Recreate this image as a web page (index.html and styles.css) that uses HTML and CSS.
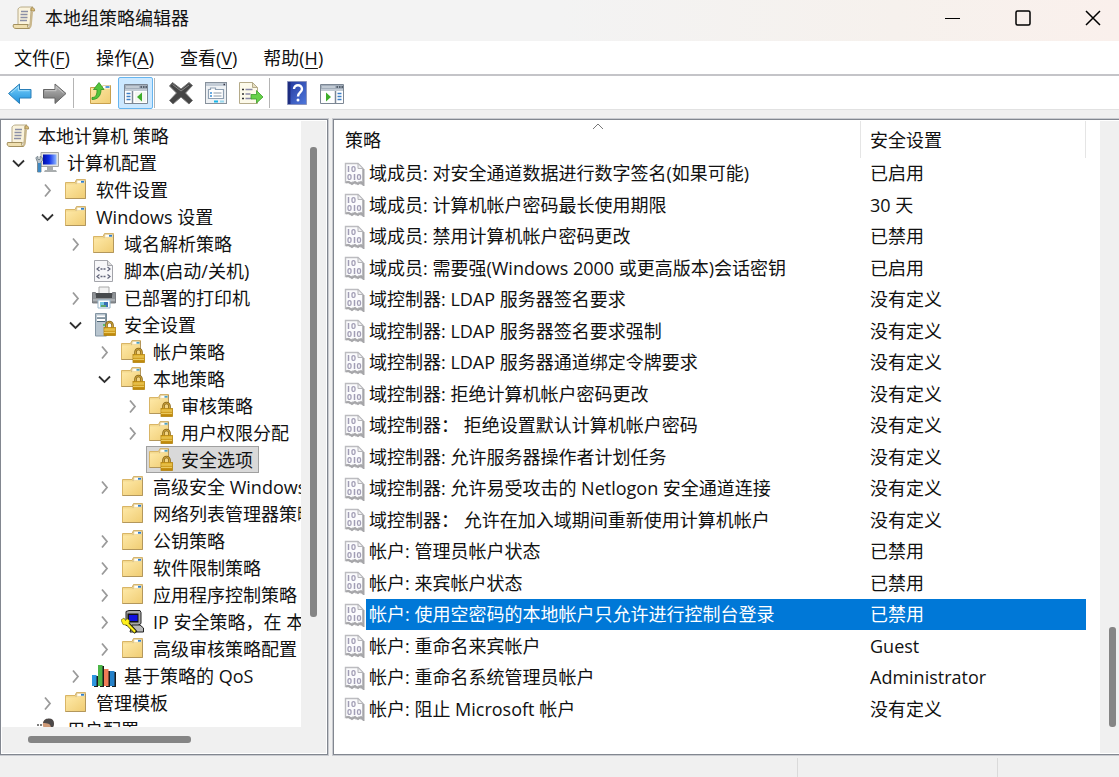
FILE: index.html
```html
<!DOCTYPE html>
<html lang="zh-CN">
<head>
    <meta charset="UTF-8">
    <meta name="viewport" content="width=device-width, initial-scale=1.0">
    <title>本地组策略编辑器</title>
    <link rel="stylesheet" href="styles.css">
</head>
<body>
    <!-- icon sprites -->
    <svg class="sprites" aria-hidden="true">
        <defs>
            <linearGradient id="gFolder" x1="0" y1="0" x2="1" y2="1"><stop offset="0" stop-color="#fee9a8"/><stop offset="1" stop-color="#f0cd74"/></linearGradient>
            <linearGradient id="gLock" x1="0" y1="0" x2="0" y2="1"><stop offset="0" stop-color="#e9bd3c"/><stop offset="1" stop-color="#b98206"/></linearGradient>
            <linearGradient id="gBlue" x1="0" y1="0" x2="0" y2="1"><stop offset="0" stop-color="#7fd3fb"/><stop offset="1" stop-color="#1b8fdd"/></linearGradient>
            <linearGradient id="gGray" x1="0" y1="0" x2="0" y2="1"><stop offset="0" stop-color="#bdbdbd"/><stop offset="1" stop-color="#6d6d6d"/></linearGradient>
            <linearGradient id="gHelp" x1="0" y1="0" x2="1" y2="1"><stop offset="0" stop-color="#24389c"/><stop offset="1" stop-color="#4f78dc"/></linearGradient>
            <linearGradient id="gScreen" x1="0" y1="0" x2="1" y2="0"><stop offset="0" stop-color="#0010a8"/><stop offset="0.45" stop-color="#1030e8"/><stop offset="1" stop-color="#8fb8ff"/></linearGradient>
        </defs>
        <symbol id="i-scroll" viewBox="0 0 24 24">
            <path d="M6 3c1-1.500 2-2 4-2h11c-2 1-2 2-2 4l-1 14H6z" fill="#faf3dc" stroke="#b9ac88"/>
            <path d="M19 2c2-1 4 .5 3.500 3H19z" fill="#d9bd78" stroke="#a58c55"/>
            <path d="M1.500 18.500H16c-1 2 0 4 2 4H4c-2.500 0-3.500-2-2.500-4z" fill="#efdfaf" stroke="#a3905f"/>
            <path d="M17 22c2-1 2-3 2-5l1-11" fill="none" stroke="#c9b78c" stroke-width="2"/>
            <path d="M9 5.500h7M8.500 8.500h7M8.500 11.500h7M8 14.500h7" stroke="#8b8fa6" stroke-width="1.300"/>
        </symbol>
        <symbol id="i-folder" viewBox="0 0 24 24">
            <path d="M1.500 4.500H11l1.500-3h9v19h-20z" fill="#f3d98f" stroke="#d9b566"/>
            <path d="M12.500 2h8.500v4h-9z" fill="#fff3cf" stroke="#cdb27a" stroke-width=".8"/>
            <path d="M14 3.800h3" stroke="#fff" stroke-width="1.600"/><path d="M17 3.800h3" stroke="#2d7fd0" stroke-width="1.800"/>
            <path d="M2 6.500h10l1.500-1H21V20H2z" fill="url(#gFolder)"/>
            <path d="M1.500 20.500h20V3" fill="none" stroke="#b3975c"/>
        </symbol>
        <symbol id="i-lock" viewBox="0 0 24 24">
            <path d="M14.500 15v-3a3 3 0 0 1 6 0v3" fill="none" stroke="#8b6a1c" stroke-width="2.600"/>
            <path d="M14.500 15v-3a3 3 0 0 1 6 0v3" fill="none" stroke="#d0a53a" stroke-width="1"/>
            <rect x="12" y="14.500" width="11.500" height="8" fill="url(#gLock)" stroke="#b5840f" stroke-width=".8"/>
            <path d="M12 17h11M12 19.500h11" stroke="#f3d670" stroke-width=".8"/>
        </symbol>
        <symbol id="i-lockfolder" viewBox="0 0 24 24">
            <path d="M.5 3.500H9.500L11 .5h8.500v19H.5z" fill="#f3d98f" stroke="#d9b566"/>
            <path d="M11 1h8v4h-8.500z" fill="#fff3cf" stroke="#cdb27a" stroke-width=".8"/>
            <path d="M12.500 2.800h3" stroke="#fff" stroke-width="1.600"/><path d="M15.500 2.800h3" stroke="#4aa0c8" stroke-width="1.800"/>
            <path d="M1 5.500h9.500l1.500-1H19V19H1z" fill="url(#gFolder)"/>
            <path d="M.5 19.500h12M19.500 1v10" stroke="#b3975c"/>
            <use href="#i-lock"/>
        </symbol>
        <symbol id="i-computer" viewBox="0 0 24 24">
            <path d="M6 1.500h17.500v14H6z" fill="#e2e3df" stroke="#a4a6a4"/>
            <rect x="8" y="3.500" width="13.500" height="10" fill="url(#gScreen)"/>
            <path d="M12 16h6v3h3l1 2H9l1-2h2z" fill="#a9adae"/>
            <path d="M1 7.500c0-1.500 1-2 2-2v3h2v-3c2 0 3 2 2.500 4L6 11v10H2.500V11z" fill="#b9c3ca" stroke="#66737c" stroke-width=".8"/>
            <rect x="3" y="12" width="3" height="9" fill="#3e8ac4"/>
        </symbol>
        <symbol id="i-script" viewBox="0 0 24 24">
            <path d="M2.500 1.500h13l5 5v16h-18z" fill="#f7f7f9" stroke="#a3a4aa"/>
            <path d="M15.500 1.500v5h5" fill="#ddd" stroke="#a3a4aa"/>
            <path d="M7.500 8L5 10l2.500 2M15.500 8l2.500 2-2.500 2M7.500 15.500L5 17.500l2.500 2M15.500 15.500l2.500 2-2.500 2" fill="none" stroke="#62657a" stroke-width="1.200"/>
            <path d="M8.500 10h6M8.500 17.500h6" stroke="#62657a" stroke-width="1.300" stroke-dasharray="2 1"/>
        </symbol>
        <symbol id="i-printer" viewBox="0 0 24 24">
            <path d="M7 1h10v7H7z" fill="#f2f2f2" stroke="#a8a8a8"/>
            <path d="M.5 6.500h3V9h17V6.500h3V17H.5z" fill="#8f9397" stroke="#686b6e" stroke-width=".8"/>
            <path d="M4 7h16v5H4z" fill="#474a4d"/>
            <path d="M1 14h22" stroke="#c8ccd0"/>
            <path d="M6 14h12v8H6z" fill="#fff" stroke="#9ab7ca"/>
            <path d="M8 16h8v5H8z" fill="#77c7df"/><path d="M12 16h4v5h-4z" fill="#3970b5"/><path d="M9 19h5v2H9z" fill="#5da66a"/>
        </symbol>
        <symbol id="i-server" viewBox="0 0 24 24">
            <path d="M3.500.5h11v22.500h-11z" fill="#b8c5cf" stroke="#8495a3"/>
            <path d="M14 1v22" stroke="#71838f" stroke-width="1.500"/>
            <path d="M5 3.500h8M5 7h8" stroke="#fff" stroke-width="2"/>
            <path d="M5 5h8M5 8.500h8" stroke="#4d6575"/>
            <path d="M11 12h2" stroke="#42b84a" stroke-width="1.500"/>
            <use href="#i-lock"/>
        </symbol>
        <symbol id="i-ipsec" viewBox="0 0 24 24">
            <path d="M5 1.500L8 .5h11l1 2v11l-3 2H5z" fill="#a7a7a7" stroke="#222"/>
            <rect x="6.500" y="3.500" width="11" height="9" fill="#111"/>
            <rect x="8" y="5" width="8.500" height="6" fill="#1010e0"/>
            <path d="M11 15h8l3.500 3v4H9z" fill="#b8b8b8" stroke="#222"/>
            <path d="M7 14l8 8.500" stroke="#111" stroke-width="4"/>
            <path d="M0 10l3-2 1.500 2.500L6 8.500l2.500 2-.5 3 7 7.500-1.500 2-8-8-3.500-.5z" fill="#fff01a" stroke="#5c5600" stroke-width=".6"/>
        </symbol>
        <symbol id="i-qos" viewBox="0 0 24 24">
            <path d="M2 12h4v11H2zM8 2h4v21H8zM14 7h4v16h-4zM20 8h4v15h-4z" fill="#1a1a1a"/>
            <path d="M0 11h4.500v11H0z" fill="#2d96e0"/><path d="M6 1h4.500v21H6z" fill="#4cb648"/><path d="M12 5h4.500v17H12z" fill="#f07c56"/><path d="M18 7h4.500v15H18z" fill="#2581c9"/>
        </symbol>
        <symbol id="i-user" viewBox="0 0 24 24">
            <path d="M8 8c-1-6 3-7 6-7s6 2 4 8l-3 6h-4z" fill="#cf9a77"/>
            <path d="M8 5c1-4 4-4.500 6-4.500 4 0 6 3 4.500 8L16 10c0-4-3-5-8-5z" fill="#4c4848"/>
            <path d="M2 7h2M5 7h2" stroke="#555" stroke-width="1.500"/>
            <path d="M5 22c0-6 4-8 8-8s8 2 8 8z" fill="#4a78b0"/>
        </symbol>
        <symbol id="i-policy" viewBox="0 0 22 24">
            <path d="M1.500 1.500h12.500l5 5v15l-2 .5-2-2-3 2-3-2-3 1.500-2-2-2.500 1z" fill="#fbfbfd" stroke="#bcbcc0" stroke-width="1.400"/>
            <path d="M2 20.500l3-.5 3 2 3-2 3 2 3-2 2.500 3V7" fill="none" stroke="#a6a6a9" stroke-width="2"/>
            <path d="M14 1.500v5h5z" fill="#f0f0f2" stroke="#b4b4b8"/>
            <path d="M4.500 4v6" stroke="#a19db5" stroke-width="1.500"/>
            <rect x="8" y="4.600" width="3" height="4.800" rx="1.500" fill="none" stroke="#a19db5" stroke-width="1.300"/>
            <rect x="4" y="12.600" width="3" height="4.800" rx="1.500" fill="none" stroke="#a19db5" stroke-width="1.300"/>
            <path d="M10.500 12v6" stroke="#a19db5" stroke-width="1.500"/>
            <rect x="13.500" y="12.600" width="3" height="4.800" rx="1.500" fill="none" stroke="#a19db5" stroke-width="1.300"/>
        </symbol>
        <symbol id="i-back" viewBox="0 0 26 24">
            <path d="M1.500 12.500L12.500 3V8.500H24v8.500H12.500V22.500z" fill="url(#gBlue)" stroke="#2a7fb8" stroke-linejoin="round"/>
            <path d="M4 12l7.500-6.500v4.200H22.500" fill="none" stroke="#a5dffb"/>
        </symbol>
        <symbol id="i-forward" viewBox="0 0 26 24">
            <path d="M24 12.500L13 3V8.500H1.500v8.500H13V22.500z" fill="url(#gGray)" stroke="#666" stroke-linejoin="round"/>
            <path d="M3 9.700h11V5.500l7.500 6.500" fill="none" stroke="#c6c6c6"/>
        </symbol>
        <symbol id="i-up" viewBox="0 0 24 24">
            <path d="M1.500 6.500H12l2-2h7.500v18h-20z" fill="url(#gFolder)" stroke="#c8a04c"/>
            <rect x="14" y="4.500" width="7" height="3" fill="#fff"/><path d="M16.500 6h4" stroke="#2d7fd0" stroke-width="1.600"/>
            <path d="M3 16.500c4.500 0 5-3.500 5-8H4.500L10 1.500l5 7h-3c0 6-3 10-9 10z" fill="#52c53b" stroke="#2f8f22" stroke-width=".8"/>
        </symbol>
        <symbol id="i-pane" viewBox="0 0 26 24">
            <path d="M1.500 3.500h23v19h-23z" fill="#fff" stroke="#7c8794"/>
            <path d="M2 4h22v6H2z" fill="#a3aebb"/><path d="M3 6h13M2 9h22" stroke="#e0e6ec"/><path d="M17.500 6h1.500M20 6h1.500M22.500 6H24" stroke="#3b4653" stroke-width="1.500"/>
            <path d="M9.500 10v12" stroke="#7c8794" stroke-width="1.500"/>
            <path d="M3.500 12.500h4M3.500 15.500h4M3.500 18.500h4" stroke="#3e7fc6" stroke-width="1.500"/>
            <path d="M12 11h11v10H12z" fill="#f4f6f2"/><path d="M19 11.500v9L14 16z" fill="#3fae2a"/>
        </symbol>
        <symbol id="i-action" viewBox="0 0 26 24">
            <path d="M1.500 3.500h23v19h-23z" fill="#fff" stroke="#7c8794"/>
            <path d="M2 4h22v6H2z" fill="#a3aebb"/><path d="M3 6h13M2 9h22" stroke="#e0e6ec"/><path d="M17.500 6h1.500M20 6h1.500M22.500 6H24" stroke="#3b4653" stroke-width="1.500"/>
            <path d="M16.500 10v12" stroke="#7c8794" stroke-width="1.500"/>
            <path d="M18.500 12.500h4M18.500 15.500h4M18.500 18.500h4" stroke="#3e7fc6" stroke-width="1.500"/>
            <path d="M7 11.500v9l5-4.500z" fill="#3fae2a"/>
        </symbol>
        <symbol id="i-delete" viewBox="0 0 26 24">
            <path d="M4.500 1.500L13 8l8-6.500 3.500 3-7 7.500 7 7.500-3.500 3.500-8-7-8 7L1.500 19.500l7-7.500-7-7z" fill="#454545" stroke="#777" stroke-linejoin="round"/>
            <path d="M4.500 3.500L13 10l8-6" fill="none" stroke="#888"/>
        </symbol>
        <symbol id="i-props" viewBox="0 0 24 24">
            <rect x="1.500" y="1.500" width="21" height="21" fill="#eef1f4" stroke="#87919c"/>
            <path d="M2 2h20v3H2z" fill="#c3ccd6"/><path d="M19.500 3.500H21" stroke="#334" stroke-width="1.500"/>
            <path d="M4.500 8.500h2V7h5v1.500h8v9h-15z" fill="#fff" stroke="#8fa0b2" stroke-width="1.200"/>
            <path d="M6 12h2M6 15h2" stroke="#3a8fd6" stroke-width="1.500"/><path d="M9.500 12h8M9.500 15h8" stroke="#8897a6"/>
            <path d="M10 20.500h4" stroke="#16b5e8" stroke-width="2"/><path d="M16 20.500h4" stroke="#9ad8ee" stroke-width="2"/>
        </symbol>
        <symbol id="i-export" viewBox="0 0 26 24">
            <path d="M1.500 1.500h13l5 5v16h-18z" fill="#fdfaea" stroke="#b5ab8a"/>
            <path d="M14.500 1.500v5h5z" fill="#e6dec0" stroke="#b5ab8a"/>
            <path d="M4 8.500h2M4 13h2M4 17.500h2" stroke="#333" stroke-width="1.600"/><path d="M7.500 8.500h7M7.500 13h5M7.500 17.500h6" stroke="#8c8aa8" stroke-width="1.300"/>
            <path d="M13 13.500h5.500v-4L25 16l-6.500 6v-4H13z" fill="#66d148" stroke="#3a9e28" stroke-width=".8"/>
        </symbol>
        <symbol id="i-help" viewBox="0 0 24 24">
            <path d="M2.500.5h19v23h-19z" fill="url(#gHelp)" stroke="#8a93bd"/>
            <path d="M3 1h2.500v22H3z" fill="#1d2c80"/>
            <path d="M9 8c0-5 8-5 8 0 0 3.500-4 3.500-4 7.500" fill="none" stroke="#fff" stroke-width="2.400"/><circle cx="13" cy="19" r="1.500" fill="#fff"/>
        </symbol>
        <symbol id="i-right" viewBox="0 0 20 20"><path d="M8 4.500L13 10.500l-5 6" fill="none" stroke="#9a9a9a" stroke-width="1.800"/></symbol>
        <symbol id="i-down" viewBox="0 0 20 20"><path d="M5 7.500l5.500 5.500L16 7.500" fill="none" stroke="#303030" stroke-width="1.800"/></symbol>
    </svg>

    <header class="titlebar">
        <svg class="icon"><use href="#i-scroll"/></svg>
        <h1>本地组策略编辑器</h1>
        <div class="window-buttons">
            <button aria-label="最小化"><svg viewBox="0 0 16 16"><path d="M0 8.500h15"/></svg></button>
            <button aria-label="最大化"><svg viewBox="0 0 16 16"><rect x="1" y="1" width="14" height="14" rx="1.500" stroke-width="1.500"/></svg></button>
            <button aria-label="关闭"><svg viewBox="0 0 16 16"><path d="M1 1l14 14M15 1L1 15" stroke-width="1.500"/></svg></button>
        </div>
    </header>

    <nav class="menubar">
        <button>文件(<u>F</u>)</button>
        <button>操作(<u>A</u>)</button>
        <button>查看(<u>V</u>)</button>
        <button>帮助(<u>H</u>)</button>
    </nav>

    <div class="toolbar">
        <button aria-label="后退"><svg><use href="#i-back"/></svg></button>
        <button aria-label="前进"><svg><use href="#i-forward"/></svg></button>
        <span class="separator"></span>
        <button aria-label="上一级"><svg><use href="#i-up"/></svg></button>
        <button class="active" aria-label="显示控制台树" aria-pressed="true"><svg><use href="#i-pane"/></svg></button>
        <span class="separator"></span>
        <button aria-label="删除"><svg><use href="#i-delete"/></svg></button>
        <button aria-label="属性"><svg><use href="#i-props"/></svg></button>
        <button aria-label="导出列表"><svg><use href="#i-export"/></svg></button>
        <span class="separator"></span>
        <button aria-label="帮助"><svg><use href="#i-help"/></svg></button>
        <button aria-label="显示操作窗格"><svg><use href="#i-action"/></svg></button>
    </div>

    <main class="panes">
        <section class="tree-pane">
            <div class="tree-body">
                <ul class="tree">
                    <li class="lv0"><span class="node"><svg class="icon"><use href="#i-scroll"/></svg>本地计算机 策略</span></li>
                    <li class="lv1"><button class="toggle" aria-label="折叠"><svg><use href="#i-down"/></svg></button><span class="node"><svg class="icon"><use href="#i-computer"/></svg>计算机配置</span></li>
                    <li class="lv2"><button class="toggle" aria-label="展开"><svg><use href="#i-right"/></svg></button><span class="node"><svg class="icon"><use href="#i-folder"/></svg>软件设置</span></li>
                    <li class="lv2"><button class="toggle" aria-label="折叠"><svg><use href="#i-down"/></svg></button><span class="node"><svg class="icon"><use href="#i-folder"/></svg>Windows 设置</span></li>
                    <li class="lv3"><button class="toggle" aria-label="展开"><svg><use href="#i-right"/></svg></button><span class="node"><svg class="icon"><use href="#i-folder"/></svg>域名解析策略</span></li>
                    <li class="lv3 leaf"><span class="node"><svg class="icon"><use href="#i-script"/></svg>脚本(启动/关机)</span></li>
                    <li class="lv3"><button class="toggle" aria-label="展开"><svg><use href="#i-right"/></svg></button><span class="node"><svg class="icon"><use href="#i-printer"/></svg>已部署的打印机</span></li>
                    <li class="lv3"><button class="toggle" aria-label="折叠"><svg><use href="#i-down"/></svg></button><span class="node"><svg class="icon"><use href="#i-server"/></svg>安全设置</span></li>
                    <li class="lv4"><button class="toggle" aria-label="展开"><svg><use href="#i-right"/></svg></button><span class="node"><svg class="icon"><use href="#i-lockfolder"/></svg>帐户策略</span></li>
                    <li class="lv4"><button class="toggle" aria-label="折叠"><svg><use href="#i-down"/></svg></button><span class="node"><svg class="icon"><use href="#i-lockfolder"/></svg>本地策略</span></li>
                    <li class="lv5"><button class="toggle" aria-label="展开"><svg><use href="#i-right"/></svg></button><span class="node"><svg class="icon"><use href="#i-lockfolder"/></svg>审核策略</span></li>
                    <li class="lv5"><button class="toggle" aria-label="展开"><svg><use href="#i-right"/></svg></button><span class="node"><svg class="icon"><use href="#i-lockfolder"/></svg>用户权限分配</span></li>
                    <li class="lv5 leaf"><span class="node selected"><svg class="icon"><use href="#i-lockfolder"/></svg>安全选项</span></li>
                    <li class="lv4"><button class="toggle" aria-label="展开"><svg><use href="#i-right"/></svg></button><span class="node"><svg class="icon"><use href="#i-folder"/></svg>高级安全 Windows</span></li>
                    <li class="lv4 leaf"><span class="node"><svg class="icon"><use href="#i-folder"/></svg>网络列表管理器策略</span></li>
                    <li class="lv4"><button class="toggle" aria-label="展开"><svg><use href="#i-right"/></svg></button><span class="node"><svg class="icon"><use href="#i-folder"/></svg>公钥策略</span></li>
                    <li class="lv4"><button class="toggle" aria-label="展开"><svg><use href="#i-right"/></svg></button><span class="node"><svg class="icon"><use href="#i-folder"/></svg>软件限制策略</span></li>
                    <li class="lv4"><button class="toggle" aria-label="展开"><svg><use href="#i-right"/></svg></button><span class="node"><svg class="icon"><use href="#i-folder"/></svg>应用程序控制策略</span></li>
                    <li class="lv4"><button class="toggle" aria-label="展开"><svg><use href="#i-right"/></svg></button><span class="node"><svg class="icon"><use href="#i-ipsec"/></svg>IP 安全策略，在 本</span></li>
                    <li class="lv4"><button class="toggle" aria-label="展开"><svg><use href="#i-right"/></svg></button><span class="node"><svg class="icon"><use href="#i-folder"/></svg>高级审核策略配置</span></li>
                    <li class="lv3"><button class="toggle" aria-label="展开"><svg><use href="#i-right"/></svg></button><span class="node"><svg class="icon"><use href="#i-qos"/></svg>基于策略的 QoS</span></li>
                    <li class="lv2"><button class="toggle" aria-label="展开"><svg><use href="#i-right"/></svg></button><span class="node"><svg class="icon"><use href="#i-folder"/></svg>管理模板</span></li>
                    <li class="lv1 leaf"><span class="node"><svg class="icon"><use href="#i-user"/></svg>用户配置</span></li>
                </ul>
                <div class="scroll-y"><div class="thumb"></div></div>
            </div>
            <div class="scroll-x"><div class="thumb"></div></div>
        </section>

        <section class="list-pane">
            <div class="list-body">
                <table class="policies">
                    <colgroup><col class="col-icon"><col><col class="col-setting"></colgroup>
                    <thead>
                        <tr>
                            <th colspan="2">策略<svg class="sort" viewBox="0 0 12 7"><path d="M1 6l5-5 5 5"/></svg></th>
                            <th>安全设置</th>
                        </tr>
                    </thead>
                    <tbody>
                        <tr><td><svg><use href="#i-policy"/></svg></td><td>域成员: 对安全通道数据进行数字签名(如果可能)</td><td>已启用</td></tr>
                        <tr><td><svg><use href="#i-policy"/></svg></td><td>域成员: 计算机帐户密码最长使用期限</td><td>30 天</td></tr>
                        <tr><td><svg><use href="#i-policy"/></svg></td><td>域成员: 禁用计算机帐户密码更改</td><td>已禁用</td></tr>
                        <tr><td><svg><use href="#i-policy"/></svg></td><td>域成员: 需要强(Windows 2000 或更高版本)会话密钥</td><td>已启用</td></tr>
                        <tr><td><svg><use href="#i-policy"/></svg></td><td>域控制器: LDAP 服务器签名要求</td><td>没有定义</td></tr>
                        <tr><td><svg><use href="#i-policy"/></svg></td><td>域控制器: LDAP 服务器签名要求强制</td><td>没有定义</td></tr>
                        <tr><td><svg><use href="#i-policy"/></svg></td><td>域控制器: LDAP 服务器通道绑定令牌要求</td><td>没有定义</td></tr>
                        <tr><td><svg><use href="#i-policy"/></svg></td><td>域控制器: 拒绝计算机帐户密码更改</td><td>没有定义</td></tr>
                        <tr><td><svg><use href="#i-policy"/></svg></td><td>域控制器： 拒绝设置默认计算机帐户密码</td><td>没有定义</td></tr>
                        <tr><td><svg><use href="#i-policy"/></svg></td><td>域控制器: 允许服务器操作者计划任务</td><td>没有定义</td></tr>
                        <tr><td><svg><use href="#i-policy"/></svg></td><td>域控制器: 允许易受攻击的 Netlogon 安全通道连接</td><td>没有定义</td></tr>
                        <tr><td><svg><use href="#i-policy"/></svg></td><td>域控制器： 允许在加入域期间重新使用计算机帐户</td><td>没有定义</td></tr>
                        <tr><td><svg><use href="#i-policy"/></svg></td><td>帐户: 管理员帐户状态</td><td>已禁用</td></tr>
                        <tr><td><svg><use href="#i-policy"/></svg></td><td>帐户: 来宾帐户状态</td><td>已禁用</td></tr>
                        <tr class="selected"><td><svg><use href="#i-policy"/></svg></td><td>帐户: 使用空密码的本地帐户只允许进行控制台登录</td><td>已禁用</td></tr>
                        <tr><td><svg><use href="#i-policy"/></svg></td><td>帐户: 重命名来宾帐户</td><td>Guest</td></tr>
                        <tr><td><svg><use href="#i-policy"/></svg></td><td>帐户: 重命名系统管理员帐户</td><td>Administrator</td></tr>
                        <tr><td><svg><use href="#i-policy"/></svg></td><td>帐户: 阻止 Microsoft 帐户</td><td>没有定义</td></tr>
                    </tbody>
                </table>
            </div>
            <div class="scroll-y"><div class="thumb"></div></div>
        </section>
    </main>

    <footer class="statusbar"><span></span><span></span><span></span></footer>
</body>
</html>
```
FILE: styles.css
```css
* {
    box-sizing: border-box;
}
body {
    margin: 0;
    height: 100vh;
    display: flex;
    flex-direction: column;
    overflow: hidden;
    background: #f0f0f0;
    color: #111;
    font-family: "Open Sans", "Noto Sans CJK SC", sans-serif;
    font-size: 18px;
    line-height: 26px;
}
button {
    margin: 0;
    padding: 0;
    border: 0;
    background: none;
    color: inherit;
    font: inherit;
}
svg {
    display: block;
    flex: none;
}
.sprites {
    position: absolute;
    width: 0;
    height: 0;
}
.icon {
    width: 24px;
    height: 24px;
}

/* title bar */
.titlebar {
    display: flex;
    align-items: center;
    height: 41px;
    padding-left: 12px;
    padding-bottom: 6px;
    gap: 9px;
    background: linear-gradient(90deg, #f3f3f3 50%, #f6f1ed 80%, #faf0ec);
}
.titlebar h1 {
    flex: 1;
    margin: 0;
    font-size: 18px;
    font-weight: normal;
}
.window-buttons {
    display: flex;
    padding-right: 2px;
}
.window-buttons button {
    width: 70px;
    height: 35px;
    display: flex;
    align-items: center;
    justify-content: center;
}
.window-buttons button:last-child {
    width: 48px;
    margin-left: 11px;
}
.window-buttons svg {
    width: 16px;
    height: 16px;
    fill: none;
    stroke: #000;
}

/* menu */
.menubar {
    display: flex;
    gap: 26px;
    height: 35px;
    padding: 0 14px;
    background: #fff;
    border-bottom: 2px solid #c4c4c8;
}
.menubar u {
    text-underline-offset: 3px;
    text-decoration-thickness: 1px;
}

/* toolbar */
.toolbar {
    display: flex;
    align-items: center;
    height: 34px;
    padding-left: 2px;
    background: #fff;
    border-bottom: 1px solid #e2e2e2;
}
.toolbar button {
    width: 35px;
    height: 32px;
    display: flex;
    align-items: center;
    justify-content: center;
    border: 1px solid transparent;
}
.toolbar button.active {
    background: #cce8ff;
    border-color: #66b5ef;
    border-radius: 2px;
}
.toolbar svg {
    width: 26px;
    height: 24px;
}
.separator {
    width: 1px;
    height: 30px;
    margin: 0 9px 0 1px;
    background: #b4b4b4;
}
.active + .separator {
    margin-right: 8px;
}

/* panes */
.panes {
    flex: 1;
    min-height: 0;
    display: flex;
    gap: 5px;
    padding-top: 9px;
}
.tree-pane,
.list-pane {
    border: 1px solid #828790;
    outline: 1px solid #c9cbd0;
    background: #fff;
    padding: 1px;
}
.tree-pane {
    width: 328px;
    flex: none;
    display: flex;
    flex-direction: column;
}
.tree-body {
    flex: 1;
    min-height: 0;
    display: flex;
}
.tree {
    flex: 1;
    min-width: 0;
    margin: 0;
    padding: 1px 0 0;
    list-style: none;
    overflow: hidden;
    white-space: nowrap;
}
.tree li {
    display: flex;
    align-items: center;
    height: 27px;
}
.lv0 { padding-left: 1px; }
.lv1 { padding-left: 6px; }
.lv2 { padding-left: 35px; }
.lv3 { padding-left: 63px; }
.lv4 { padding-left: 92px; }
.lv5 { padding-left: 120px; }
.toggle,
.toggle svg {
    flex: none;
    width: 20px;
    height: 20px;
}
.leaf::before {
    content: "";
    flex: none;
    width: 20px;
}
.node {
    flex: none;
    display: flex;
    align-items: center;
    gap: 8px;
    height: 27px;
    margin-left: 4px;
    padding: 0 5px 0 2px;
    border: 1px solid transparent;
}
.lv0 .node {
    margin-left: 0;
}
.node.selected {
    background: #d9d9d9;
    border-color: #a0a0a0;
}
.scroll-y {
    display: flex;
    justify-content: center;
    background: #f0f0f0;
}
.thumb {
    background: #858585;
    border-radius: 3px;
}
.tree-pane .scroll-y {
    width: 25px;
    padding-top: 26px;
}
.tree-pane .scroll-y .thumb {
    width: 7px;
    height: 81%;
}
.scroll-x {
    height: 26px;
    padding: 9px 26px;
    background: #f0f0f0;
}
.scroll-x .thumb {
    width: 60%;
    height: 7px;
}

/* policy list */
.list-pane {
    flex: 1;
    min-width: 0;
    display: flex;
    border-right: 0;
    padding-right: 0;
}
.list-body {
    flex: 1;
    min-width: 0;
    padding-right: 14px;
    overflow: hidden;
}
.list-pane .scroll-y {
    width: 19px;
    align-items: flex-end;
    padding: 0 0 26px 6px;
}
.list-pane .scroll-y .thumb {
    width: 7px;
    height: 100px;
}
.policies {
    width: 100%;
    table-layout: fixed;
    border-collapse: separate;
    border-spacing: 0;
}
.col-icon {
    width: 31px;
}
.col-setting {
    width: 225px;
}
.policies th {
    position: relative;
    height: 37px;
    padding: 0 9px;
    border-right: 1px solid #e5e5e5;
    font-weight: normal;
    text-align: left;
}
.policies th:first-child {
    padding-left: 10px;
}
.sort {
    position: absolute;
    top: 2px;
    left: 49%;
    width: 12px;
    height: 7px;
    fill: none;
    stroke: #777;
}
.policies td {
    height: 31px;
    padding: 0 3px 1px;
    white-space: nowrap;
    overflow: hidden;
}
.policies tr:nth-child(even) td {
    height: 32px;
}
.policies td:first-child {
    padding: 0 0 0 9px;
}
.policies td:last-child {
    padding-left: 9px;
}
.policies td svg {
    width: 22px;
    height: 24px;
}
.policies .selected td:not(:first-child) {
    background: #0078d7;
    color: #fff;
}

/* status bar */
.statusbar {
    display: flex;
    height: 22px;
    padding-top: 3px;
}
.statusbar span {
    width: 200px;
    border-right: 1px solid #dadada;
}
.statusbar span:first-child {
    flex: 1;
}
.statusbar span:last-child {
    width: 121px;
    border: 0;
}
```
